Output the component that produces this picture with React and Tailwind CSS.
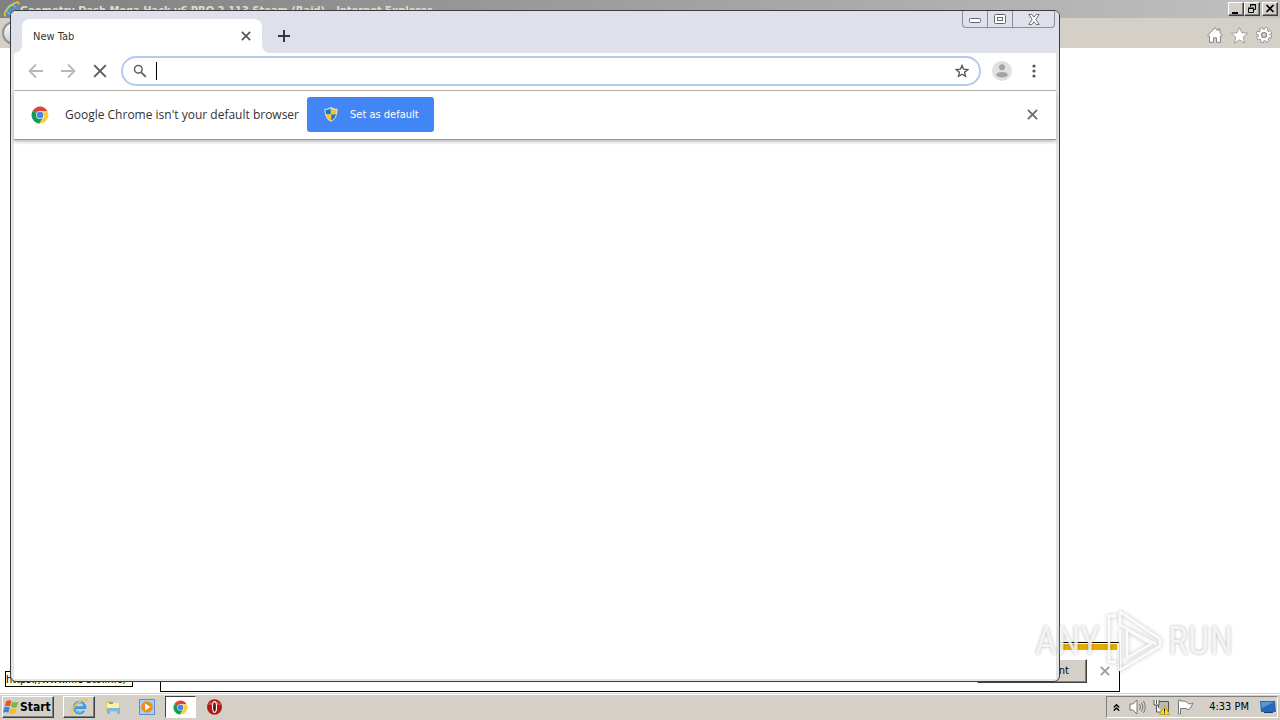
import { ChevronsUp } from "lucide-react";

const tahoma = "font-['Tahoma','DejaVu_Sans_Condensed','Liberation_Sans',sans-serif]";
const raised = "border border-t-white border-l-white border-r-[#404040] border-b-[#404040] shadow-[inset_-1px_-1px_0_#808080]";

function IeLogo({ size = 20 }) {
  return (
    <svg width={size} height={size} viewBox="0 0 20 20" fill="none" aria-hidden="true">
      <path d="M15.4 14.2A6 6 0 1 1 16.6 10.8H6" stroke="#3a9be4" strokeWidth="3" />
      <path d="M14.6 14A5.6 5.6 0 0 1 5 12M5.5 8a5 5 0 0 1 9-.5" stroke="#8fd4fa" strokeWidth="1" />
      <path d="M3.2 17.8C-.6 16.4 4 8.6 10 4.6s9.4-4.2 8.4-.6" stroke="#f0c63c" strokeWidth="1.8" />
    </svg>
  );
}

function ChromeLogo({ size = 18 }) {
  return (
    <svg width={size} height={size} viewBox="0 0 18 18" aria-hidden="true">
      <path d="M9 9 1.7 4.7A8.5 8.5 0 0 1 16.4 5H9z" fill="#db4437" />
      <path d="M9 9 1.7 4.7A8.5 8.5 0 0 0 8.5 17.5L12.5 11z" fill="#0f9d58" />
      <path d="M9 5h7.4A8.5 8.5 0 0 1 8.5 17.5L12.5 11z" fill="#ffcd40" />
      <circle cx="9" cy="9" r="4" fill="#f1f1f1" />
      <circle cx="9" cy="9" r="3.3" fill="#4285f4" />
    </svg>
  );
}

function Cross({ size = 12, className = "", width = 2 }) {
  return (
    <svg width={size} height={size} viewBox="0 0 12 12" fill="none" className={className} aria-hidden="true">
      <path d="M1 1l10 10M11 1L1 11" stroke="currentColor" strokeWidth={width} />
    </svg>
  );
}

function Arrow({ flip = false }) {
  return (
    <svg width="16" height="16" viewBox="0 0 16 16" fill="none" className={flip ? "rotate-180" : ""} aria-hidden="true">
      <path d="M15 8H2M8 1.5 1.5 8 8 14.5" stroke="#b8b8b8" strokeWidth="1.8" />
    </svg>
  );
}

function ExplorerWindow() {
  return (
    <section className="flex min-h-0 flex-1 flex-col bg-white">
      <header className="flex h-[18px] flex-none items-center bg-linear-to-r from-[#808080] to-[#c0c0c0] pr-[2px] pl-[3px]">
        <IeLogo size={17} />
        <h1 className="flex-1 pt-[3px] font-['DejaVu_Sans_Condensed','Liberation_Sans',sans-serif] text-[11px] leading-4 font-bold text-[#dedbd4]">
          Geometry Dash Mega Hack v6 PRO 2.113 Steam (Raid) - Internet Explorer
        </h1>
        <div className="flex">
          <button type="button" aria-label="Minimize window" className={`h-[14px] w-4 bg-[#d4d0c8] ${raised}`}>
            <svg width="14" height="12" viewBox="0 0 14 12"><path d="M3 9h6v2H3z" /></svg>
          </button>
          <button type="button" aria-label="Restore window" className={`h-[14px] w-4 bg-[#d4d0c8] ${raised}`}>
            <svg width="14" height="12" viewBox="0 0 14 12" fill="none" stroke="#000">
              <path d="M5.5 4V1.5h5v5H9M5 2h6M3.5 5.5h5v4h-5zM3 5h6" />
            </svg>
          </button>
          <button type="button" aria-label="Close window" className={`ml-[2px] h-[14px] w-4 bg-[#d4d0c8] ${raised}`}>
            <svg width="14" height="12" viewBox="0 0 14 12" fill="none" stroke="#000" strokeWidth="1.7">
              <path d="M3.5 2l7 7M10.5 2l-7 7" />
            </svg>
          </button>
        </div>
      </header>
      <div className="flex h-[30px] flex-none items-center justify-between bg-[#d4d0c8] pr-2 pl-[2px]">
        <button type="button" aria-label="Back" className="h-6 w-6 rounded-full border-2 border-[#929292] bg-linear-to-b from-white to-[#c1ccd8]" />
        <div className="flex gap-2 pt-1">
          <button type="button" aria-label="Home">
            <svg width="16" height="16" viewBox="0 0 16 16" fill="#fff" stroke="#858585" strokeLinejoin="round">
              <path d="M8 .8.6 8.3l1.3 1.1.6-.4v6.3h4v-4.500h3v4.500h4V9l.6.4 1.300-1.100L13 5.800V2h-2v1.800z" />
            </svg>
          </button>
          <button type="button" aria-label="Favorites">
            <svg width="17" height="17" viewBox="0 0 17 17" fill="#fff" stroke="#858585" strokeWidth=".7">
              <path d="M8.5.5l2.300 5.200 5.700.5-4.300 3.900 1.400 6-5.100-3.200-5.100 3.200 1.400-6L.5 6.200l5.700-.5z" />
            </svg>
          </button>
          <button type="button" aria-label="Tools">
            <svg width="16" height="16" viewBox="0 0 16 16" fill="none">
              <circle cx="8" cy="8" r="6.3" stroke="#858585" strokeWidth="3.4" strokeDasharray="3 1.95" />
              <circle cx="8" cy="8" r="4.3" stroke="#858585" strokeWidth="4" />
              <circle cx="8" cy="8" r="6" stroke="#fff" strokeWidth="2.6" strokeDasharray="2 2.71" strokeDashoffset="-.4" />
              <circle cx="8" cy="8" r="4.3" stroke="#fff" strokeWidth="2.4" />
              <circle cx="8" cy="8" r="2.4" fill="#d4d0c8" stroke="#858585" strokeWidth=".8" />
            </svg>
          </button>
        </div>
      </div>
      <main className="relative flex-1">
        <div className="absolute bottom-[6px] left-[5px] h-4 w-32 overflow-hidden border border-black bg-[#ffffe1] text-[11px] leading-4 whitespace-nowrap text-black">
          https://www.file-sto.info/
        </div>
        <div className="absolute right-[160px] bottom-px left-[160px] flex h-[50px] flex-col border border-black bg-white p-px">
          <div className="mr-px h-[6px] flex-none bg-[#e6ac00]" />
          <div className="flex flex-1 items-center justify-end gap-[13px] pt-[2px] pr-2">
            <button type="button" className={`h-6 w-[110px] bg-[#d4d0c8] pr-[17px] text-right text-[11px] ${raised}`}>Allow content</button>
            <button type="button" aria-label="Dismiss" className="text-[#999]"><Cross size={10} /></button>
          </div>
        </div>
      </main>
    </section>
  );
}

function Shield() {
  return (
    <svg width="14" height="15" viewBox="0 0 14 15" aria-hidden="true">
      <path d="M7 0c2 1.3 4 1.8 6.5 1.8 0 6-1.5 10.2-6.5 13C2 12 .5 7.8.5 1.8 3 1.8 5 1.3 7 0z" fill="#e6e6d8" />
      <path d="M6.8 1.4v5.8H1.9C1.6 5.7 1.5 4.2 1.5 2.7c2-.1 3.6-.5 5.3-1.3zM7.2 7.2h4.9c-.8 2.9-2.3 5-4.9 6.5z" fill="#1a78c7" />
      <path d="M7.2 1.4c1.7.8 3.3 1.2 5.3 1.3 0 1.5-.1 3-.4 4.5H7.2zM1.9 7.2h4.9v6.5c-2.6-1.5-4.1-3.6-4.9-6.5z" fill="#fbc312" />
    </svg>
  );
}

function ChromeWindow() {
  return (
    <section className="absolute top-[10px] right-[220px] bottom-[38px] left-[10px] flex flex-col rounded-md border border-[#3c3c3c] bg-[#e3e4e6] px-[3px] pb-[2px]">
      <header className="-mx-[3px] flex h-[42px] flex-none items-end rounded-t-[5px] bg-[#dee1e9] pl-[11px]">
        <div className="relative flex h-[34px] w-60 items-center justify-between rounded-t-lg bg-white px-[11px] text-[11px] text-[#333]">
          <span className="pt-[2px]">New Tab</span>
          <button type="button" aria-label="Close tab" className="text-[#555]"><Cross size={10} /></button>
          <svg width="8" height="8" viewBox="0 0 8 8" className="absolute bottom-0 -left-2" aria-hidden="true"><path d="M8 0v8H0a8 8 0 0 0 8-8z" fill="#fff" /></svg>
          <svg width="8" height="8" viewBox="0 0 8 8" className="absolute -right-2 bottom-0" aria-hidden="true"><path d="M0 0v8h8a8 8 0 0 1-8-8z" fill="#fff" /></svg>
        </div>
        <button type="button" aria-label="New tab" className="mb-[11px] ml-4">
          <svg width="12" height="12" viewBox="0 0 12 12"><path d="M5 0h2v5h5v2H7v5H5V7H0V5h5z" fill="#33363d" /></svg>
        </button>
        <div className="mr-1 ml-auto flex h-[17px] self-start rounded-b border border-t-0 border-[#8b8e98] text-[#62656d]">
          <button type="button" aria-label="Minimize" className="flex w-6 items-center justify-center pt-1">
            <svg width="12" height="6" viewBox="0 0 12 6" fill="#fff" stroke="currentColor"><rect x=".5" y=".5" width="11" height="4" rx="1" /></svg>
          </button>
          <button type="button" aria-label="Maximize" className="flex w-[26px] items-center justify-center border-x border-[#8b8e98]">
            <svg width="12" height="10" viewBox="0 0 12 10" fill="#fff" stroke="currentColor"><rect x=".5" y=".5" width="11" height="9" rx="1" /><rect x="3.5" y="3.5" width="5" height="3" /></svg>
          </button>
          <button type="button" aria-label="Close" className="flex w-[41px] items-center justify-center">
            <svg width="12" height="11" viewBox="0 0 12 11" fill="#fff" stroke="currentColor" strokeWidth=".9"><path d="M.8.5h3L6 3.2 8.2.5h3L7.8 5.5l3.4 5h-3L6 7.8l-2.2 2.7h-3l3.4-5z" /></svg>
          </button>
        </div>
      </header>
      <div className="flex h-[38px] flex-none items-center border-b border-[#b6b0aa] bg-white pr-5 pb-[2px] pl-[14px]">
        <div className="flex items-center gap-4">
          <button type="button" aria-label="Go back"><Arrow /></button>
          <button type="button" aria-label="Go forward"><Arrow flip /></button>
          <button type="button" aria-label="Stop loading" className="flex w-4 justify-center text-[#5a5a5a]"><Cross size={14} width={1.6} /></button>
        </div>
        <div className="mr-[11px] ml-[13px] flex h-[30px] flex-1 items-center rounded-full border-2 border-[#b5caef] bg-white px-[10px]">
          <svg width="14" height="14" viewBox="0 0 14 14" fill="none" stroke="#5f6368" aria-hidden="true">
            <circle cx="5.3" cy="5.3" r="3.8" strokeWidth="1.5" /><path d="M8.3 8.3l4.5 4.5" strokeWidth="1.9" />
          </svg>
          <span className="ml-[9px] h-[18px] w-px bg-black" />
          <input type="text" aria-label="Address and search bar" className="min-w-0 flex-1 text-sm outline-none" />
          <button type="button" aria-label="Bookmark this tab">
            <svg width="14" height="14" viewBox="0 0 14 14" fill="none" stroke="#555a60" strokeWidth="1.4">
              <path d="M7 1.5l1.6 3.7 4.1.4-3.1 2.7.9 4L7 10.2l-3.5 2.1.9-4L1.3 5.6l4.1-.4z" />
            </svg>
          </button>
        </div>
        <button type="button" aria-label="Profile">
          <svg width="20" height="20" viewBox="0 0 20 20"><circle cx="10" cy="10" r="10" fill="#e0e0e0" /><circle cx="10" cy="6.3" r="3" fill="#a3a3a3" /><ellipse cx="10" cy="13.7" rx="5.8" ry="2.8" fill="#a3a3a3" /></svg>
        </button>
        <button type="button" aria-label="Menu" className="ml-5">
          <svg width="4" height="14" viewBox="0 0 4 14" fill="#55585d"><circle cx="2" cy="2" r="1.6" /><circle cx="2" cy="7" r="1.6" /><circle cx="2" cy="12" r="1.6" /></svg>
        </button>
      </div>
      <div className="relative flex h-[49px] flex-none items-center border-b border-[#969696] bg-white pr-[18px] pb-px pl-[17px] shadow-[0_2px_3px_#00000040]">
        <ChromeLogo />
        <p className="ml-4 font-['Open_Sans','Liberation_Sans',sans-serif] text-[12px] text-[#333]">Google Chrome isn't your default browser</p>
        <button type="button" className="ml-2 flex h-[35px] w-[127px] items-center gap-3 rounded-[3px] bg-[#4285f4] pl-[17px] text-[11px] text-white">
          <Shield />
          <span className="pt-px">Set as default</span>
        </button>
        <button type="button" aria-label="Dismiss message" className="ml-auto text-[#6a6a6a]"><Cross size={11} /></button>
      </div>
      <div className="flex-1 bg-white" />
    </section>
  );
}

function Watermark() {
  return (
    <div className="pointer-events-none absolute right-[47px] bottom-[47px] flex items-center gap-[5px] font-['Liberation_Sans_Narrow','Roboto_Condensed','Roboto',sans-serif] text-[38px] leading-10 text-white/80 [text-shadow:0_0_3px_#00000050]">
      <span>ANY</span>
      <svg width="58" height="64" viewBox="0 0 58 64" fill="none" className="drop-shadow-[0_0_2px_#00000050]" aria-hidden="true">
        <g stroke="#fff" strokeOpacity=".85" strokeWidth="2.5" strokeLinejoin="round">
          <path d="M11 7H4v46h7M15 3v13l36 19M15 3l40 27v7L15 61V22M22 21v28l24-14z" />
        </g>
      </svg>
      <span>RUN</span>
    </div>
  );
}

function Taskbar() {
  return (
    <footer className="flex h-[27px] flex-none items-center border-t border-[#d4d0c8] bg-[#d4d0c8] px-[2px] shadow-[inset_0_1px_0_#fff]">
      <button type="button" className={`flex h-[22px] w-[52px] items-center bg-[#d4d0c8] text-[12px] font-bold text-black ${raised}`}>
        <svg width="17" height="17" viewBox="0 0 16 16" className="flex-none" aria-hidden="true">
          <path d="M3 2c2-1 3.5-1 5 0L6.6 7c-1.5-.9-3-.9-5 0z" fill="#e6532c" />
          <path d="M8.8 2.5c2 1 3.5 1 5.5.1L13 7.5c-2 .9-3.5.9-5.4-.1z" fill="#75b843" />
          <path d="M1.3 8c2-.9 3.5-.9 5 0L5 13c-1.7-1-3.2-.8-5 0z" fill="#3b87cf" />
          <path d="M7.3 8.5c2 1 3.5 1 5.4.1l-1.4 4.9c-2 .9-3.6.9-5.4-.1z" fill="#f5bc24" />
        </svg>
        Start
      </button>
      <nav className="ml-[9px] flex items-center">
        <button type="button" aria-label="Internet Explorer" className={`flex h-[22px] w-8 items-center justify-center bg-[#d4d0c8] ${raised}`}><IeLogo size={18} /></button>
        <button type="button" aria-label="File Explorer" className="ml-[10px]">
          <svg width="16" height="16" viewBox="0 0 16 16"><path d="M1 2h5l1 2h8v9H1z" fill="#e7c75e" /><path d="M2 4h12v6H2z" fill="#fff1a8" /><path d="M2 9h13v6h-3v-3H5v3H2z" fill="#78bce4" /><path d="M4 3h4v2H4z" fill="#6cb95c" /></svg>
        </button>
        <button type="button" aria-label="Media Player" className="ml-[18px]">
          <svg width="16" height="16" viewBox="0 0 16 16"><path d="M.5.5h15v15H.5z" fill="#a9cff0" stroke="#5093cf" /><circle cx="8" cy="8" r="5.8" fill="#f28a1d" /><path d="M6 4.5v7L11.5 8z" fill="#fff" /></svg>
        </button>
        <button type="button" aria-label="Google Chrome" className="ml-[10px] flex h-[22px] w-[31px] items-center justify-center border border-t-[#404040] border-r-white border-b-white border-l-[#404040] bg-white"><ChromeLogo size={15} /></button>
        <button type="button" aria-label="Opera" className="ml-[11px]">
          <svg width="15" height="16" viewBox="0 0 15 16"><ellipse cx="7.5" cy="8" rx="7.5" ry="7.8" fill="#b31818" /><path d="M1 6a7 6 0 0 1 13 0z" fill="#d34c43" /><ellipse cx="7.5" cy="8" rx="2" ry="5.3" fill="#5a1010" stroke="#fff" strokeWidth="1.2" /></svg>
        </button>
      </nav>
      <div className="ml-auto flex h-[22px] items-center border border-t-[#808080] border-r-white border-b-white border-l-[#808080] pr-px pl-1 text-[11px] text-black">
        <button type="button" aria-label="Show hidden icons"><ChevronsUp size={11} strokeWidth={3} /></button>
        <svg width="17" height="16" viewBox="0 0 17 16" fill="none" stroke="#777" className="ml-[7px]" aria-label="Volume">
          <path d="M1 5h3l4-4v14l-4-4H1z" fill="#fff" /><path d="M10.5 5q2 3 0 6M12.5 3.5q3 4.500 0 9M14.5 2q3.5 6 0 12" />
        </svg>
        <svg width="17" height="16" viewBox="0 0 17 16" className="ml-[7px]" aria-label="Network">
          <path d="M5.5 2.5h10v10h-10z" fill="#bbb" stroke="#555" /><path d="M1 1v5h5V1M3.5 1v4M3.5 6v7h5" fill="#fff" stroke="#555" /><path d="M11.5 6.5l5 9h-10z" fill="#ffdc22" stroke="#a88900" strokeWidth=".6" /><path d="M11 9.5h1v3h-1zM11 13.5h1v1h-1z" />
        </svg>
        <svg width="17" height="16" viewBox="0 0 17 16" fill="#fff" stroke="#777" className="ml-[7px]" aria-label="Action Center">
          <path d="M1.5 1v14h2V9.5h5.500c1 1.500 3 1 4.500-.5l2.500-5c-2 1-4 1-5 .5C10 2.500 8 2 3.500 2V1z" />
        </svg>
        <time className="ml-[15px] pt-px">4:33 PM</time>
        <button type="button" aria-label="Show desktop" className="ml-[11px]">
          <svg width="16" height="14" viewBox="0 0 16 14"><path d="M0 1h15l1 11H1z" fill="#2867b5" /><path d="M1 2h13L2 8z" fill="#5297df" /><path d="M4 12h9v1H4z" fill="#163e75" /></svg>
        </button>
      </div>
    </footer>
  );
}

export default function App() {
  return (
    <div className={`relative flex h-screen flex-col overflow-hidden bg-white ${tahoma}`}>
      <ExplorerWindow />
      <ChromeWindow />
      <Taskbar />
      <Watermark />
    </div>
  );
}
